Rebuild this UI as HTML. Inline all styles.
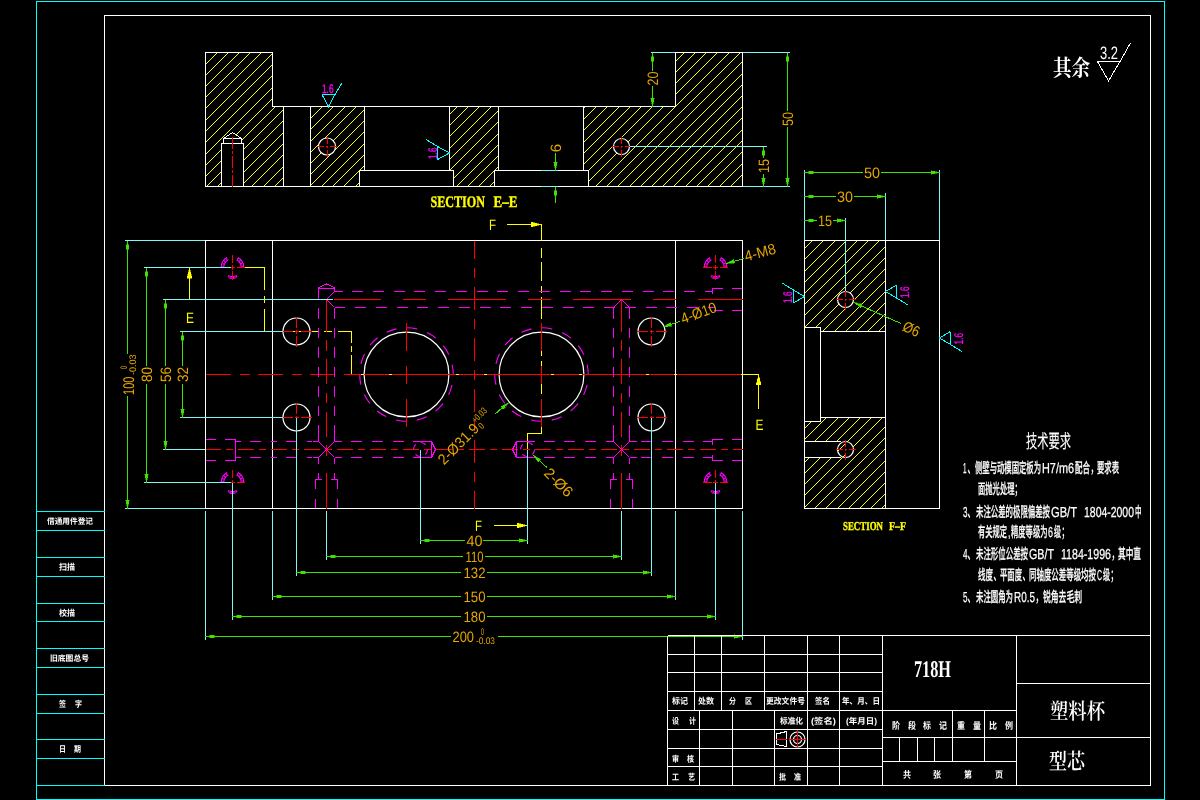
<!DOCTYPE html>
<html lang="zh"><head><meta charset="utf-8"><title>型芯 - 塑料杯</title>
<style>
html,body{margin:0;padding:0;background:#000;width:1200px;height:800px;overflow:hidden}
svg{display:block;will-change:transform}
.t{font-family:"Liberation Sans","DejaVu Sans",sans-serif}
.s{font-family:"Liberation Serif","DejaVu Serif",serif}
.s[fill="#ffff00"]{stroke:#ffff00;stroke-width:.35px}
.c{font-family:"Liberation Sans","Noto Sans CJK SC",sans-serif;font-weight:500;stroke:#fff;stroke-width:.25px}
.cb{font-family:"Liberation Sans","Noto Sans CJK SC",sans-serif}
.cs{font-family:"Liberation Serif","Noto Serif CJK SC",serif}
</style></head><body>
<svg width="1200" height="800" viewBox="0 0 1200 800" shape-rendering="crispEdges" text-rendering="geometricPrecision">
<rect width="1200" height="800" fill="#000"/>
<rect x="36.5" y="1.5" width="1128" height="798" fill="none" stroke="#00ffff"/>
<polyline points="104.5,785.5 104.5,15.5 1150.5,15.5 1150.5,785.5 104.5,785.5" fill="none" stroke="#ffffff" stroke-width="1"/>
<line x1="36.5" y1="511.5" x2="104.5" y2="511.5" stroke="#00ffff" stroke-width="1"/>
<line x1="36.5" y1="530.5" x2="104.5" y2="530.5" stroke="#00ffff" stroke-width="1"/>
<line x1="36.5" y1="557.5" x2="104.5" y2="557.5" stroke="#00ffff" stroke-width="1"/>
<line x1="36.5" y1="576.5" x2="104.5" y2="576.5" stroke="#00ffff" stroke-width="1"/>
<line x1="36.5" y1="603.5" x2="104.5" y2="603.5" stroke="#00ffff" stroke-width="1"/>
<line x1="36.5" y1="621.5" x2="104.5" y2="621.5" stroke="#00ffff" stroke-width="1"/>
<line x1="36.5" y1="648.5" x2="104.5" y2="648.5" stroke="#00ffff" stroke-width="1"/>
<line x1="36.5" y1="667.5" x2="104.5" y2="667.5" stroke="#00ffff" stroke-width="1"/>
<line x1="36.5" y1="694.5" x2="104.5" y2="694.5" stroke="#00ffff" stroke-width="1"/>
<line x1="36.5" y1="713.5" x2="104.5" y2="713.5" stroke="#00ffff" stroke-width="1"/>
<line x1="36.5" y1="739.5" x2="104.5" y2="739.5" stroke="#00ffff" stroke-width="1"/>
<line x1="36.5" y1="758.5" x2="104.5" y2="758.5" stroke="#00ffff" stroke-width="1"/>
<line x1="36.5" y1="785.5" x2="104.5" y2="785.5" stroke="#00ffff" stroke-width="1"/>
<clipPath id="h1"><path d="M205.5,52.5H272.5V106.5H283.5V186.5H205.5Z M221.5,186.5V143.5H223.5V138.5L232.5,132.5L241.5,138.5V143.5H243.5V186.5Z" clip-rule="evenodd"/></clipPath>
<g clip-path="url(#h1)" stroke="#ffff00" stroke-width="1" shape-rendering="crispEdges">
<path d="M71.00,187.00L206.00,52.00M83.00,187.00L218.00,52.00M94.00,187.00L229.00,52.00M105.00,187.00L240.00,52.00M116.00,187.00L251.00,52.00M127.00,187.00L262.00,52.00M139.00,187.00L274.00,52.00M150.00,187.00L285.00,52.00M161.00,187.00L296.00,52.00M173.00,187.00L308.00,52.00M184.00,187.00L319.00,52.00M195.00,187.00L330.00,52.00M206.00,187.00L341.00,52.00M217.00,187.00L352.00,52.00M229.00,187.00L364.00,52.00M240.00,187.00L375.00,52.00M251.00,187.00L386.00,52.00M263.00,187.00L398.00,52.00M274.00,187.00L409.00,52.00" fill="none"/>
</g>
<clipPath id="h2"><path d="M310.5,106.5H364.5V170.5H359.5V186.5H310.5Z M318.5,146.5a8.5,8.5 0 1 0 17.0,0a8.5,8.5 0 1 0 -17.0,0Z" clip-rule="evenodd"/></clipPath>
<g clip-path="url(#h2)" stroke="#ffff00" stroke-width="1" shape-rendering="crispEdges">
<path d="M231.00,187.00L312.00,106.00M242.00,187.00L323.00,106.00M253.00,187.00L334.00,106.00M265.00,187.00L346.00,106.00M276.00,187.00L357.00,106.00M287.00,187.00L368.00,106.00M298.00,187.00L379.00,106.00M309.00,187.00L390.00,106.00M321.00,187.00L402.00,106.00M332.00,187.00L413.00,106.00M343.00,187.00L424.00,106.00M355.00,187.00L436.00,106.00" fill="none"/>
</g>
<clipPath id="h3"><path d="M449.5,106.5H498.5V170.5H494.5V186.5H453.5V170.5H449.5Z" clip-rule="evenodd"/></clipPath>
<g clip-path="url(#h3)" stroke="#ffff00" stroke-width="1" shape-rendering="crispEdges">
<path d="M377.00,187.00L458.00,106.00M388.00,187.00L469.00,106.00M399.00,187.00L480.00,106.00M411.00,187.00L492.00,106.00M422.00,187.00L503.00,106.00M433.00,187.00L514.00,106.00M445.00,187.00L526.00,106.00M456.00,187.00L537.00,106.00M467.00,187.00L548.00,106.00M478.00,187.00L559.00,106.00M489.00,187.00L570.00,106.00" fill="none"/>
</g>
<clipPath id="h4"><path d="M583.5,106.5H675.5V52.5H742.5V186.5H588.5V170.5H583.5Z M613.5,146.5a8,8 0 1 0 16,0a8,8 0 1 0 -16,0Z" clip-rule="evenodd"/></clipPath>
<g clip-path="url(#h4)" stroke="#ffff00" stroke-width="1" shape-rendering="crispEdges">
<path d="M449.00,187.00L584.00,52.00M460.00,187.00L595.00,52.00M471.00,187.00L606.00,52.00M482.00,187.00L617.00,52.00M493.00,187.00L628.00,52.00M505.00,187.00L640.00,52.00M516.00,187.00L651.00,52.00M527.00,187.00L662.00,52.00M539.00,187.00L674.00,52.00M550.00,187.00L685.00,52.00M561.00,187.00L696.00,52.00M572.00,187.00L707.00,52.00M583.00,187.00L718.00,52.00M595.00,187.00L730.00,52.00M606.00,187.00L741.00,52.00M617.00,187.00L752.00,52.00M629.00,187.00L764.00,52.00M640.00,187.00L775.00,52.00M651.00,187.00L786.00,52.00M662.00,187.00L797.00,52.00M673.00,187.00L808.00,52.00M685.00,187.00L820.00,52.00M696.00,187.00L831.00,52.00M707.00,187.00L842.00,52.00M719.00,187.00L854.00,52.00M730.00,187.00L865.00,52.00M741.00,187.00L876.00,52.00" fill="none"/>
</g>
<polygon points="205.5,52.5 272.5,52.5 272.5,106.5 675.5,106.5 675.5,52.5 742.5,52.5 742.5,186.5 205.5,186.5" fill="none" stroke="#ffffff" stroke-width="1"/>
<line x1="283.5" y1="106.5" x2="283.5" y2="186.5" stroke="#ffffff" stroke-width="1"/>
<line x1="310.5" y1="106.5" x2="310.5" y2="186.5" stroke="#ffffff" stroke-width="1"/>
<line x1="364.5" y1="106.5" x2="364.5" y2="170.5" stroke="#ffffff" stroke-width="1"/>
<line x1="449.5" y1="106.5" x2="449.5" y2="170.5" stroke="#ffffff" stroke-width="1"/>
<line x1="498.5" y1="106.5" x2="498.5" y2="170.5" stroke="#ffffff" stroke-width="1"/>
<line x1="583.5" y1="106.5" x2="583.5" y2="170.5" stroke="#ffffff" stroke-width="1"/>
<polyline points="359.5,186.5 359.5,170.5 453.5,170.5 453.5,186.5" fill="none" stroke="#ffffff" stroke-width="1"/>
<polyline points="494.5,186.5 494.5,170.5 588.5,170.5 588.5,186.5" fill="none" stroke="#ffffff" stroke-width="1"/>
<polyline points="221.5,186.5 221.5,143.5 243.5,143.5 243.5,186.5" fill="none" stroke="#ffffff" stroke-width="1"/>
<polyline points="223.5,143.5 223.5,138.5 241.5,138.5 241.5,143.5" fill="none" stroke="#ffffff" stroke-width="1"/>
<polyline points="223.5,138.5 232.5,132.5 241.5,138.5" fill="none" stroke="#ffffff" stroke-width="1"/>
<line x1="232.5" y1="137" x2="232.5" y2="187" stroke="#ff0000" stroke-width="1" stroke-dasharray="12 2 3 2"/>
<circle cx="327" cy="146.5" r="8.5" fill="none" stroke="#ffffff" stroke-width="1.2" shape-rendering="geometricPrecision"/>
<circle cx="621.5" cy="146.5" r="8" fill="none" stroke="#ffffff" stroke-width="1.2" shape-rendering="geometricPrecision"/>
<line x1="317" y1="146.5" x2="337" y2="146.5" stroke="#ff0000" stroke-width="1" stroke-dasharray="7 2 2 2"/>
<line x1="327" y1="136.5" x2="327" y2="156.5" stroke="#ff0000" stroke-width="1" stroke-dasharray="7 2 2 2"/>
<line x1="611.5" y1="146.5" x2="631.5" y2="146.5" stroke="#ff0000" stroke-width="1" stroke-dasharray="7 2 2 2"/>
<line x1="621.5" y1="136.5" x2="621.5" y2="156.5" stroke="#ff0000" stroke-width="1" stroke-dasharray="7 2 2 2"/>
<g transform="translate(328.5 106.5) rotate(0)">
<polyline points="-6.5,-12 6.5,-12 0,0 -6.5,-12" fill="none" stroke="#00ffff"/>
<line x1="6.5" y1="-12" x2="13.5" y2="-23.5" stroke="#00ffff"/>
</g>
<text class="t" x="322" y="92.5" font-size="12.5" fill="#ff00ff" textLength="11.5" lengthAdjust="spacingAndGlyphs" stroke="#ff00ff" stroke-width="0.35">1.6</text>
<g transform="translate(449.5 153) rotate(-90)">
<polyline points="-6.5,-12 6.5,-12 0,0 -6.5,-12" fill="none" stroke="#00ffff"/>
<line x1="6.5" y1="-12" x2="13.5" y2="-23.5" stroke="#00ffff"/>
</g>
<text class="t" x="436.5" y="159" font-size="12.5" fill="#ff00ff" textLength="11.5" lengthAdjust="spacingAndGlyphs" transform="rotate(-90 436.5 159)" stroke="#ff00ff" stroke-width="0.35">1.6</text>
<line x1="651" y1="52.5" x2="675" y2="52.5" stroke="#80f5f5" stroke-width="1"/>
<line x1="651" y1="106.5" x2="661" y2="106.5" stroke="#80f5f5" stroke-width="1"/>
<line x1="652.5" y1="52.5" x2="652.5" y2="71" stroke="#40e000" stroke-width="1"/>
<line x1="652.5" y1="86" x2="652.5" y2="106.5" stroke="#40e000" stroke-width="1"/>
<polygon points="652.50,52.50 654.30,61.00 650.70,61.00" fill="#40e000" stroke="#40e000" stroke-width="0.5"/>
<polygon points="652.50,106.50 650.70,98.00 654.30,98.00" fill="#40e000" stroke="#40e000" stroke-width="0.5"/>
<text class="t" x="658.0" y="78.5" font-size="15" fill="#e6a800" text-anchor="middle" textLength="14" lengthAdjust="spacingAndGlyphs" transform="rotate(-90 658.0 78.5)">20</text>
<line x1="743" y1="52.5" x2="790" y2="52.5" stroke="#80f5f5" stroke-width="1"/>
<line x1="743" y1="186.5" x2="790" y2="186.5" stroke="#80f5f5" stroke-width="1"/>
<line x1="787.5" y1="52.5" x2="787.5" y2="111" stroke="#40e000" stroke-width="1"/>
<line x1="787.5" y1="127" x2="787.5" y2="186.5" stroke="#40e000" stroke-width="1"/>
<polygon points="787.50,52.50 789.30,61.00 785.70,61.00" fill="#40e000" stroke="#40e000" stroke-width="0.5"/>
<polygon points="787.50,186.50 785.70,178.00 789.30,178.00" fill="#40e000" stroke="#40e000" stroke-width="0.5"/>
<text class="t" x="793.0" y="119" font-size="15" fill="#e6a800" text-anchor="middle" textLength="14" lengthAdjust="spacingAndGlyphs" transform="rotate(-90 793.0 119)">50</text>
<line x1="630" y1="146.5" x2="767" y2="146.5" stroke="#80f5f5" stroke-width="1"/>
<line x1="763.5" y1="146.5" x2="763.5" y2="158" stroke="#40e000" stroke-width="1"/>
<line x1="763.5" y1="174" x2="763.5" y2="186.5" stroke="#40e000" stroke-width="1"/>
<polygon points="763.50,146.50 765.30,155.00 761.70,155.00" fill="#40e000" stroke="#40e000" stroke-width="0.5"/>
<polygon points="763.50,186.50 761.70,178.00 765.30,178.00" fill="#40e000" stroke="#40e000" stroke-width="0.5"/>
<text class="t" x="769.0" y="166" font-size="15" fill="#e6a800" text-anchor="middle" textLength="14" lengthAdjust="spacingAndGlyphs" transform="rotate(-90 769.0 166)">15</text>
<line x1="541" y1="170.5" x2="558" y2="170.5" stroke="#80f5f5" stroke-width="1"/>
<line x1="541" y1="186.5" x2="558" y2="186.5" stroke="#80f5f5" stroke-width="1"/>
<line x1="555.5" y1="153" x2="555.5" y2="170.5" stroke="#40e000" stroke-width="1"/>
<line x1="555.5" y1="186.5" x2="555.5" y2="203" stroke="#40e000" stroke-width="1"/>
<polygon points="555.50,170.50 553.70,162.00 557.30,162.00" fill="#40e000" stroke="#40e000" stroke-width="0.5"/>
<polygon points="555.50,186.50 557.30,195.00 553.70,195.00" fill="#40e000" stroke="#40e000" stroke-width="0.5"/>
<text class="t" x="561" y="148" font-size="15" fill="#e6a800" text-anchor="middle" transform="rotate(-90 561 148)">6</text>
<text class="s" x="430.5" y="206.5" font-size="16" fill="#ffff00" textLength="54.5" lengthAdjust="spacingAndGlyphs" font-weight="bold">SECTION</text>
<text class="s" x="493.5" y="206.5" font-size="16" fill="#ffff00" textLength="24" lengthAdjust="spacingAndGlyphs" font-weight="bold">E–E</text>
<rect x="205.5" y="240.5" width="537" height="268" fill="none" stroke="#fff"/>
<line x1="272.5" y1="240.5" x2="272.5" y2="508.5" stroke="#ffffff" stroke-width="1"/>
<line x1="675.5" y1="240.5" x2="675.5" y2="508.5" stroke="#ffffff" stroke-width="1"/>
<polyline points="245,267.5 264.5,267.5 264.5,331.5" fill="none" stroke="#ffff00" stroke-width="1" stroke-dasharray="42 6 7 6 200"/>
<line x1="264.5" y1="331.5" x2="351.5" y2="331.5" stroke="#ffff00" stroke-width="1" stroke-dasharray="54 5 8 6 20"/>
<line x1="351.5" y1="331.5" x2="351.5" y2="374.5" stroke="#ffff00" stroke-width="1" stroke-dasharray="11.5 2.5 6.5 2.5 20"/>
<line x1="351.5" y1="374.5" x2="742.5" y2="374.5" stroke="#ffff00" stroke-width="1"/>
<polyline points="742.5,374.5 758.5,374.5 758.5,409" fill="none" stroke="#ffff00" stroke-width="1"/>
<polygon points="758.50,374.50 761.00,384.50 756.00,384.50" fill="#ffff00" stroke="#ffff00" stroke-width="0.5"/>
<line x1="189.5" y1="268" x2="189.5" y2="300" stroke="#ffff00" stroke-width="1"/>
<polygon points="189.50,268.00 192.00,278.00 187.00,278.00" fill="#ffff00" stroke="#ffff00" stroke-width="0.5"/>
<text class="t" x="186" y="322.5" font-size="15" fill="#ffff00" textLength="8" lengthAdjust="spacingAndGlyphs">E</text>
<text class="t" x="755.5" y="429.5" font-size="15" fill="#ffff00" textLength="8" lengthAdjust="spacingAndGlyphs">E</text>
<line x1="507" y1="224.5" x2="541.5" y2="224.5" stroke="#ffff00" stroke-width="1"/>
<polygon points="541.00,224.50 531.00,227.00 531.00,222.00" fill="#ffff00" stroke="#ffff00" stroke-width="0.5"/>
<line x1="541.5" y1="224.5" x2="541.5" y2="240.5" stroke="#ffff00" stroke-width="1"/>
<line x1="541.5" y1="248" x2="541.5" y2="433.5" stroke="#ffff00" stroke-width="1" stroke-dasharray="10 4 18.5 5 7.5 3.5 22 5"/>
<polyline points="541.5,427 541.5,433.5 527.5,433.5 527.5,449.5" fill="none" stroke="#ffff00" stroke-width="1"/>
<line x1="494" y1="525.5" x2="527.5" y2="525.5" stroke="#ffff00" stroke-width="1"/>
<polygon points="527.00,525.50 517.00,528.00 517.00,523.00" fill="#ffff00" stroke="#ffff00" stroke-width="0.5"/>
<text class="t" x="489" y="229.5" font-size="15" fill="#ffff00" textLength="7" lengthAdjust="spacingAndGlyphs">F</text>
<text class="t" x="475" y="530.5" font-size="15" fill="#ffff00" textLength="7" lengthAdjust="spacingAndGlyphs">F</text>
<circle cx="406.5" cy="374.5" r="42.4" fill="none" stroke="#ffffff" stroke-width="1.2" shape-rendering="geometricPrecision"/>
<circle cx="406.5" cy="374.5" r="46.75" fill="none" stroke="#ff00ff" stroke-width="1.1" stroke-dasharray="10.5 10.48" stroke-dashoffset="10.5" shape-rendering="geometricPrecision"/>
<line x1="406.5" y1="323" x2="406.5" y2="427" stroke="#ff0000" stroke-width="1" stroke-dasharray="27.5 15 18 15 28"/>
<circle cx="541.5" cy="374.5" r="42.4" fill="none" stroke="#ffffff" stroke-width="1.2" shape-rendering="geometricPrecision"/>
<circle cx="541.5" cy="374.5" r="46.75" fill="none" stroke="#ff00ff" stroke-width="1.1" stroke-dasharray="10.5 10.48" stroke-dashoffset="10.5" shape-rendering="geometricPrecision"/>
<line x1="541.5" y1="323" x2="541.5" y2="427" stroke="#ff0000" stroke-width="1" stroke-dasharray="27.5 15 18 15 28"/>
<circle cx="296.5" cy="331.5" r="13.5" fill="none" stroke="#ffffff" stroke-width="1.2" shape-rendering="geometricPrecision"/>
<line x1="281.5" y1="331.5" x2="311.5" y2="331.5" stroke="#ff0000" stroke-width="1" stroke-dasharray="11 2 4 2"/>
<line x1="296.5" y1="316.5" x2="296.5" y2="346.5" stroke="#ff0000" stroke-width="1" stroke-dasharray="11 2 4 2"/>
<circle cx="296.5" cy="417.5" r="13.5" fill="none" stroke="#ffffff" stroke-width="1.2" shape-rendering="geometricPrecision"/>
<line x1="281.5" y1="417.5" x2="311.5" y2="417.5" stroke="#ff0000" stroke-width="1" stroke-dasharray="11 2 4 2"/>
<line x1="296.5" y1="402.5" x2="296.5" y2="432.5" stroke="#ff0000" stroke-width="1" stroke-dasharray="11 2 4 2"/>
<circle cx="651.5" cy="331.5" r="13.5" fill="none" stroke="#ffffff" stroke-width="1.2" shape-rendering="geometricPrecision"/>
<line x1="636.5" y1="331.5" x2="666.5" y2="331.5" stroke="#ff0000" stroke-width="1" stroke-dasharray="11 2 4 2"/>
<line x1="651.5" y1="316.5" x2="651.5" y2="346.5" stroke="#ff0000" stroke-width="1" stroke-dasharray="11 2 4 2"/>
<circle cx="651.5" cy="417.5" r="13.5" fill="none" stroke="#ffffff" stroke-width="1.2" shape-rendering="geometricPrecision"/>
<line x1="636.5" y1="417.5" x2="666.5" y2="417.5" stroke="#ff0000" stroke-width="1" stroke-dasharray="11 2 4 2"/>
<line x1="651.5" y1="402.5" x2="651.5" y2="432.5" stroke="#ff0000" stroke-width="1" stroke-dasharray="11 2 4 2"/>
<path d="M223.80,267.35 A8.7,8.7 0 0 1 228.42,259.82" fill="none" stroke="#ff00ff" stroke-width="1.1" shape-rendering="geometricPrecision"/>
<path d="M221.20,267.30 A11.3,11.3 0 0 1 227.19,257.52" fill="none" stroke="#ff00ff" stroke-width="1.1" shape-rendering="geometricPrecision"/>
<path d="M222.50,267.33 A10,10 0 0 1 227.81,258.67" fill="none" stroke="#ff00ff" stroke-width="1.6" stroke-dasharray="1.3 1.6" shape-rendering="geometricPrecision"/>
<path d="M236.58,259.82 A8.7,8.7 0 0 1 241.20,267.35" fill="none" stroke="#ff00ff" stroke-width="1.1" shape-rendering="geometricPrecision"/>
<path d="M237.81,257.52 A11.3,11.3 0 0 1 243.80,267.30" fill="none" stroke="#ff00ff" stroke-width="1.1" shape-rendering="geometricPrecision"/>
<path d="M237.19,258.67 A10,10 0 0 1 242.50,267.33" fill="none" stroke="#ff00ff" stroke-width="1.6" stroke-dasharray="1.3 1.6" shape-rendering="geometricPrecision"/>
<path d="M236.82,275.62 A9.2,9.2 0 0 1 228.18,275.62" fill="none" stroke="#ff00ff" stroke-width="1" shape-rendering="geometricPrecision"/>
<path d="M236.26,277.84 A11,11 0 0 1 228.74,277.84" fill="none" stroke="#ff00ff" stroke-width="1" shape-rendering="geometricPrecision"/>
<path d="M237.19,276.33 A10,10 0 0 1 227.81,276.33" fill="none" stroke="#ff00ff" stroke-width="1.5" stroke-dasharray="1.3 1.6" shape-rendering="geometricPrecision"/>
<line x1="232.5" y1="255.0" x2="232.5" y2="280.0" stroke="#ff0000" stroke-width="1" stroke-dasharray="8 2 5 1 9"/>
<line x1="220.0" y1="267.5" x2="245.0" y2="267.5" stroke="#ff0000" stroke-width="1" stroke-dasharray="9 1 5 2 8"/>
<path d="M706.80,267.35 A8.7,8.7 0 0 1 711.42,259.82" fill="none" stroke="#ff00ff" stroke-width="1.1" shape-rendering="geometricPrecision"/>
<path d="M704.20,267.30 A11.3,11.3 0 0 1 710.19,257.52" fill="none" stroke="#ff00ff" stroke-width="1.1" shape-rendering="geometricPrecision"/>
<path d="M705.50,267.33 A10,10 0 0 1 710.81,258.67" fill="none" stroke="#ff00ff" stroke-width="1.6" stroke-dasharray="1.3 1.6" shape-rendering="geometricPrecision"/>
<path d="M719.58,259.82 A8.7,8.7 0 0 1 724.20,267.35" fill="none" stroke="#ff00ff" stroke-width="1.1" shape-rendering="geometricPrecision"/>
<path d="M720.81,257.52 A11.3,11.3 0 0 1 726.80,267.30" fill="none" stroke="#ff00ff" stroke-width="1.1" shape-rendering="geometricPrecision"/>
<path d="M720.19,258.67 A10,10 0 0 1 725.50,267.33" fill="none" stroke="#ff00ff" stroke-width="1.6" stroke-dasharray="1.3 1.6" shape-rendering="geometricPrecision"/>
<path d="M719.82,275.62 A9.2,9.2 0 0 1 711.18,275.62" fill="none" stroke="#ff00ff" stroke-width="1" shape-rendering="geometricPrecision"/>
<path d="M719.26,277.84 A11,11 0 0 1 711.74,277.84" fill="none" stroke="#ff00ff" stroke-width="1" shape-rendering="geometricPrecision"/>
<path d="M720.19,276.33 A10,10 0 0 1 710.81,276.33" fill="none" stroke="#ff00ff" stroke-width="1.5" stroke-dasharray="1.3 1.6" shape-rendering="geometricPrecision"/>
<line x1="715.5" y1="255.0" x2="715.5" y2="280.0" stroke="#ff0000" stroke-width="1" stroke-dasharray="8 2 5 1 9"/>
<line x1="703.0" y1="267.5" x2="728.0" y2="267.5" stroke="#ff0000" stroke-width="1" stroke-dasharray="9 1 5 2 8"/>
<path d="M223.80,482.35 A8.7,8.7 0 0 1 228.42,474.82" fill="none" stroke="#ff00ff" stroke-width="1.1" shape-rendering="geometricPrecision"/>
<path d="M221.20,482.30 A11.3,11.3 0 0 1 227.19,472.52" fill="none" stroke="#ff00ff" stroke-width="1.1" shape-rendering="geometricPrecision"/>
<path d="M222.50,482.33 A10,10 0 0 1 227.81,473.67" fill="none" stroke="#ff00ff" stroke-width="1.6" stroke-dasharray="1.3 1.6" shape-rendering="geometricPrecision"/>
<path d="M236.58,474.82 A8.7,8.7 0 0 1 241.20,482.35" fill="none" stroke="#ff00ff" stroke-width="1.1" shape-rendering="geometricPrecision"/>
<path d="M237.81,472.52 A11.3,11.3 0 0 1 243.80,482.30" fill="none" stroke="#ff00ff" stroke-width="1.1" shape-rendering="geometricPrecision"/>
<path d="M237.19,473.67 A10,10 0 0 1 242.50,482.33" fill="none" stroke="#ff00ff" stroke-width="1.6" stroke-dasharray="1.3 1.6" shape-rendering="geometricPrecision"/>
<path d="M236.82,490.62 A9.2,9.2 0 0 1 228.18,490.62" fill="none" stroke="#ff00ff" stroke-width="1" shape-rendering="geometricPrecision"/>
<path d="M236.26,492.84 A11,11 0 0 1 228.74,492.84" fill="none" stroke="#ff00ff" stroke-width="1" shape-rendering="geometricPrecision"/>
<path d="M237.19,491.33 A10,10 0 0 1 227.81,491.33" fill="none" stroke="#ff00ff" stroke-width="1.5" stroke-dasharray="1.3 1.6" shape-rendering="geometricPrecision"/>
<line x1="232.5" y1="470.0" x2="232.5" y2="495.0" stroke="#ff0000" stroke-width="1" stroke-dasharray="8 2 5 1 9"/>
<line x1="220.0" y1="482.5" x2="245.0" y2="482.5" stroke="#ff0000" stroke-width="1" stroke-dasharray="9 1 5 2 8"/>
<path d="M706.80,482.35 A8.7,8.7 0 0 1 711.42,474.82" fill="none" stroke="#ff00ff" stroke-width="1.1" shape-rendering="geometricPrecision"/>
<path d="M704.20,482.30 A11.3,11.3 0 0 1 710.19,472.52" fill="none" stroke="#ff00ff" stroke-width="1.1" shape-rendering="geometricPrecision"/>
<path d="M705.50,482.33 A10,10 0 0 1 710.81,473.67" fill="none" stroke="#ff00ff" stroke-width="1.6" stroke-dasharray="1.3 1.6" shape-rendering="geometricPrecision"/>
<path d="M719.58,474.82 A8.7,8.7 0 0 1 724.20,482.35" fill="none" stroke="#ff00ff" stroke-width="1.1" shape-rendering="geometricPrecision"/>
<path d="M720.81,472.52 A11.3,11.3 0 0 1 726.80,482.30" fill="none" stroke="#ff00ff" stroke-width="1.1" shape-rendering="geometricPrecision"/>
<path d="M720.19,473.67 A10,10 0 0 1 725.50,482.33" fill="none" stroke="#ff00ff" stroke-width="1.6" stroke-dasharray="1.3 1.6" shape-rendering="geometricPrecision"/>
<path d="M719.82,490.62 A9.2,9.2 0 0 1 711.18,490.62" fill="none" stroke="#ff00ff" stroke-width="1" shape-rendering="geometricPrecision"/>
<path d="M719.26,492.84 A11,11 0 0 1 711.74,492.84" fill="none" stroke="#ff00ff" stroke-width="1" shape-rendering="geometricPrecision"/>
<path d="M720.19,491.33 A10,10 0 0 1 710.81,491.33" fill="none" stroke="#ff00ff" stroke-width="1.5" stroke-dasharray="1.3 1.6" shape-rendering="geometricPrecision"/>
<line x1="715.5" y1="470.0" x2="715.5" y2="495.0" stroke="#ff0000" stroke-width="1" stroke-dasharray="8 2 5 1 9"/>
<line x1="703.0" y1="482.5" x2="728.0" y2="482.5" stroke="#ff0000" stroke-width="1" stroke-dasharray="9 1 5 2 8"/>
<line x1="205.5" y1="374.5" x2="352" y2="374.5" stroke="#ff0000" stroke-width="1" stroke-dasharray="25.5 8.5 10 8"/>
<line x1="351.5" y1="374.5" x2="742.5" y2="374.5" stroke="#ff0000" stroke-width="1" stroke-dasharray="64 3 25 3" stroke-dashoffset="54.5"/>
<line x1="474.5" y1="240.5" x2="474.5" y2="508.5" stroke="#ff0000" stroke-width="1" stroke-dasharray="23.5 8.5 10.5 8.5" stroke-dashoffset="5"/>
<line x1="334" y1="299.5" x2="742.5" y2="299.5" stroke="#ff0000" stroke-width="1" stroke-dasharray="58 22 23 22" stroke-dashoffset="11"/>
<line x1="205.5" y1="449.5" x2="742.5" y2="449.5" stroke="#ff0000" stroke-width="1" stroke-dasharray="16 5 7 5" stroke-dashoffset="0.5"/>
<line x1="326.5" y1="299.5" x2="326.5" y2="332" stroke="#ff0000" stroke-width="1"/>
<line x1="326.5" y1="340" x2="326.5" y2="463.5" stroke="#ff0000" stroke-width="1" stroke-dasharray="10.5 8.5 25 8.5"/>
<line x1="326.5" y1="472.5" x2="326.5" y2="508.5" stroke="#ff0000" stroke-width="1"/>
<line x1="621.5" y1="299.5" x2="621.5" y2="332" stroke="#ff0000" stroke-width="1"/>
<line x1="621.5" y1="340" x2="621.5" y2="463.5" stroke="#ff0000" stroke-width="1" stroke-dasharray="10.5 8.5 25 8.5"/>
<line x1="621.5" y1="472.5" x2="621.5" y2="508.5" stroke="#ff0000" stroke-width="1"/>
<line x1="352" y1="291.5" x2="713" y2="291.5" stroke="#ff00ff" stroke-width="1" stroke-dasharray="11 9.75"/>
<line x1="355" y1="307.5" x2="715" y2="307.5" stroke="#ff00ff" stroke-width="1" stroke-dasharray="11 9.75"/>
<line x1="235.5" y1="441.5" x2="313" y2="441.5" stroke="#ff00ff" stroke-width="1" stroke-dasharray="5.5 9 11 10"/>
<line x1="351" y1="441.5" x2="413" y2="441.5" stroke="#ff00ff" stroke-width="1" stroke-dasharray="11 9.75"/>
<line x1="543.5" y1="441.5" x2="608" y2="441.5" stroke="#ff00ff" stroke-width="1" stroke-dasharray="11 9.75"/>
<line x1="641" y1="441.5" x2="712.5" y2="441.5" stroke="#ff00ff" stroke-width="1" stroke-dasharray="11 9.75"/>
<line x1="235.5" y1="457.5" x2="313" y2="457.5" stroke="#ff00ff" stroke-width="1" stroke-dasharray="5.5 9 11 10"/>
<line x1="351" y1="457.5" x2="413" y2="457.5" stroke="#ff00ff" stroke-width="1" stroke-dasharray="11 9.75"/>
<line x1="543.5" y1="457.5" x2="608" y2="457.5" stroke="#ff00ff" stroke-width="1" stroke-dasharray="11 9.75"/>
<line x1="641" y1="457.5" x2="712.5" y2="457.5" stroke="#ff00ff" stroke-width="1" stroke-dasharray="11 9.75"/>
<line x1="318.5" y1="308" x2="318.5" y2="441.5" stroke="#ff00ff" stroke-width="1" stroke-dasharray="10.5 9"/>
<line x1="318.5" y1="432" x2="318.5" y2="441.5" stroke="#ff00ff" stroke-width="1"/>
<line x1="318.5" y1="457.5" x2="318.5" y2="463.5" stroke="#ff00ff" stroke-width="1"/>
<line x1="318.5" y1="473" x2="318.5" y2="479.5" stroke="#ff00ff" stroke-width="1"/>
<line x1="334.5" y1="308" x2="334.5" y2="441.5" stroke="#ff00ff" stroke-width="1" stroke-dasharray="10.5 9"/>
<line x1="334.5" y1="432" x2="334.5" y2="441.5" stroke="#ff00ff" stroke-width="1"/>
<line x1="334.5" y1="457.5" x2="334.5" y2="463.5" stroke="#ff00ff" stroke-width="1"/>
<line x1="334.5" y1="473" x2="334.5" y2="479.5" stroke="#ff00ff" stroke-width="1"/>
<line x1="613.5" y1="308" x2="613.5" y2="441.5" stroke="#ff00ff" stroke-width="1" stroke-dasharray="10.5 9"/>
<line x1="613.5" y1="432" x2="613.5" y2="441.5" stroke="#ff00ff" stroke-width="1"/>
<line x1="613.5" y1="457.5" x2="613.5" y2="463.5" stroke="#ff00ff" stroke-width="1"/>
<line x1="613.5" y1="473" x2="613.5" y2="479.5" stroke="#ff00ff" stroke-width="1"/>
<line x1="629.5" y1="308" x2="629.5" y2="441.5" stroke="#ff00ff" stroke-width="1" stroke-dasharray="10.5 9"/>
<line x1="629.5" y1="432" x2="629.5" y2="441.5" stroke="#ff00ff" stroke-width="1"/>
<line x1="629.5" y1="457.5" x2="629.5" y2="463.5" stroke="#ff00ff" stroke-width="1"/>
<line x1="629.5" y1="473" x2="629.5" y2="479.5" stroke="#ff00ff" stroke-width="1"/>
<polyline points="318.5,299.5 318.5,287.5 326.5,284 334.5,287.5 334.5,291.5 326.5,299.5 334.5,307.5" fill="none" stroke="#ff00ff" stroke-width="1"/>
<line x1="318.5" y1="288.5" x2="334.5" y2="288.5" stroke="#ff00ff" stroke-width="1"/>
<line x1="334.5" y1="291.5" x2="343" y2="291.5" stroke="#ff00ff" stroke-width="1"/>
<line x1="334.5" y1="307.5" x2="345" y2="307.5" stroke="#ff00ff" stroke-width="1"/>
<polyline points="613.5,307.5 621.5,299.5 629.5,307.5" fill="none" stroke="#ff00ff" stroke-width="1"/>
<line x1="318.5" y1="441.5" x2="334.5" y2="457.5" stroke="#ff00ff" stroke-width="1"/>
<line x1="318.5" y1="457.5" x2="334.5" y2="441.5" stroke="#ff00ff" stroke-width="1"/>
<line x1="313.0" y1="441.5" x2="318.5" y2="441.5" stroke="#ff00ff" stroke-width="1"/>
<line x1="334.5" y1="441.5" x2="341.5" y2="441.5" stroke="#ff00ff" stroke-width="1"/>
<line x1="313.0" y1="457.5" x2="318.5" y2="457.5" stroke="#ff00ff" stroke-width="1"/>
<line x1="334.5" y1="457.5" x2="341.5" y2="457.5" stroke="#ff00ff" stroke-width="1"/>
<line x1="613.5" y1="441.5" x2="629.5" y2="457.5" stroke="#ff00ff" stroke-width="1"/>
<line x1="613.5" y1="457.5" x2="629.5" y2="441.5" stroke="#ff00ff" stroke-width="1"/>
<line x1="608.0" y1="441.5" x2="613.5" y2="441.5" stroke="#ff00ff" stroke-width="1"/>
<line x1="629.5" y1="441.5" x2="636.5" y2="441.5" stroke="#ff00ff" stroke-width="1"/>
<line x1="608.0" y1="457.5" x2="613.5" y2="457.5" stroke="#ff00ff" stroke-width="1"/>
<line x1="629.5" y1="457.5" x2="636.5" y2="457.5" stroke="#ff00ff" stroke-width="1"/>
<polyline points="322.0,479.5 315.5,479.5 315.5,489" fill="none" stroke="#ff00ff" stroke-width="1"/>
<line x1="315.5" y1="499" x2="315.5" y2="508" stroke="#ff00ff" stroke-width="1"/>
<polyline points="331.0,479.5 337.5,479.5 337.5,489" fill="none" stroke="#ff00ff" stroke-width="1"/>
<line x1="337.5" y1="499" x2="337.5" y2="508" stroke="#ff00ff" stroke-width="1"/>
<polyline points="617.0,479.5 610.5,479.5 610.5,489" fill="none" stroke="#ff00ff" stroke-width="1"/>
<line x1="610.5" y1="499" x2="610.5" y2="508" stroke="#ff00ff" stroke-width="1"/>
<polyline points="626.0,479.5 632.5,479.5 632.5,489" fill="none" stroke="#ff00ff" stroke-width="1"/>
<line x1="632.5" y1="499" x2="632.5" y2="508" stroke="#ff00ff" stroke-width="1"/>
<polyline points="225,439.5 235.5,439.5 235.5,460.5 225,460.5" fill="none" stroke="#ff00ff" stroke-width="1"/>
<line x1="205.5" y1="439.5" x2="216" y2="439.5" stroke="#ff00ff" stroke-width="1"/>
<line x1="205.5" y1="460.5" x2="216" y2="460.5" stroke="#ff00ff" stroke-width="1"/>
<polyline points="723,439.5 712.5,439.5 712.5,445" fill="none" stroke="#ff00ff" stroke-width="1"/>
<polyline points="723,460.5 712.5,460.5 712.5,455" fill="none" stroke="#ff00ff" stroke-width="1"/>
<line x1="732" y1="439.5" x2="742" y2="439.5" stroke="#ff00ff" stroke-width="1"/>
<line x1="732" y1="460.5" x2="742" y2="460.5" stroke="#ff00ff" stroke-width="1"/>
<polyline points="712.5,294 712.5,288.5 723,288.5" fill="none" stroke="#ff00ff" stroke-width="1"/>
<line x1="732" y1="288.5" x2="742" y2="288.5" stroke="#ff00ff" stroke-width="1"/>
<line x1="714" y1="310.5" x2="723" y2="310.5" stroke="#ff00ff" stroke-width="1"/>
<line x1="732" y1="310.5" x2="742" y2="310.5" stroke="#ff00ff" stroke-width="1"/>
<polyline points="413,441.5 431.5,441.5 435.5,449.5 431.5,457.5 413,457.5" fill="none" stroke="#ff00ff" stroke-width="1"/>
<line x1="431.5" y1="441.5" x2="431.5" y2="457.5" stroke="#ff00ff" stroke-width="1"/>
<circle cx="420.5" cy="449.5" r="7" fill="none" stroke="#ff00ff" stroke-width="1.2" stroke-dasharray="5.5 5.5" shape-rendering="geometricPrecision"/>
<polyline points="535,441.5 516.5,441.5 512.5,449.5 516.5,457.5 535,457.5" fill="none" stroke="#ff00ff" stroke-width="1"/>
<line x1="516.5" y1="441.5" x2="516.5" y2="457.5" stroke="#ff00ff" stroke-width="1"/>
<circle cx="527.5" cy="449.5" r="7" fill="none" stroke="#ff00ff" stroke-width="1.2" stroke-dasharray="5.5 5.5" shape-rendering="geometricPrecision"/>
<line x1="125" y1="240.5" x2="205" y2="240.5" stroke="#80f5f5" stroke-width="1"/>
<line x1="144" y1="267.5" x2="231" y2="267.5" stroke="#80f5f5" stroke-width="1"/>
<line x1="163" y1="299.5" x2="333" y2="299.5" stroke="#80f5f5" stroke-width="1"/>
<line x1="180" y1="331.5" x2="283" y2="331.5" stroke="#80f5f5" stroke-width="1"/>
<line x1="180" y1="417.5" x2="283" y2="417.5" stroke="#80f5f5" stroke-width="1"/>
<line x1="163" y1="449.5" x2="205" y2="449.5" stroke="#80f5f5" stroke-width="1"/>
<line x1="144" y1="482.5" x2="231" y2="482.5" stroke="#80f5f5" stroke-width="1"/>
<line x1="125" y1="508.5" x2="205" y2="508.5" stroke="#80f5f5" stroke-width="1"/>
<line x1="127.5" y1="240.5" x2="127.5" y2="353.5" stroke="#40e000" stroke-width="1"/>
<line x1="127.5" y1="396" x2="127.5" y2="508.5" stroke="#40e000" stroke-width="1"/>
<polygon points="127.50,240.50 129.30,249.00 125.70,249.00" fill="#40e000" stroke="#40e000" stroke-width="0.5"/>
<polygon points="127.50,508.50 125.70,500.00 129.30,500.00" fill="#40e000" stroke="#40e000" stroke-width="0.5"/>
<line x1="146.5" y1="267.5" x2="146.5" y2="366" stroke="#40e000" stroke-width="1"/>
<line x1="146.5" y1="384" x2="146.5" y2="482.5" stroke="#40e000" stroke-width="1"/>
<polygon points="146.50,267.50 148.30,276.00 144.70,276.00" fill="#40e000" stroke="#40e000" stroke-width="0.5"/>
<polygon points="146.50,482.50 144.70,474.00 148.30,474.00" fill="#40e000" stroke="#40e000" stroke-width="0.5"/>
<text class="t" x="152.0" y="374.5" font-size="15" fill="#e6a800" text-anchor="middle" textLength="15" lengthAdjust="spacingAndGlyphs" transform="rotate(-90 152.0 374.5)">80</text>
<line x1="165.5" y1="299.5" x2="165.5" y2="366" stroke="#40e000" stroke-width="1"/>
<line x1="165.5" y1="384" x2="165.5" y2="449.5" stroke="#40e000" stroke-width="1"/>
<polygon points="165.50,299.50 167.30,308.00 163.70,308.00" fill="#40e000" stroke="#40e000" stroke-width="0.5"/>
<polygon points="165.50,449.50 163.70,441.00 167.30,441.00" fill="#40e000" stroke="#40e000" stroke-width="0.5"/>
<text class="t" x="171.0" y="374.5" font-size="15" fill="#e6a800" text-anchor="middle" textLength="15" lengthAdjust="spacingAndGlyphs" transform="rotate(-90 171.0 374.5)">56</text>
<line x1="182.5" y1="331.5" x2="182.5" y2="366" stroke="#40e000" stroke-width="1"/>
<line x1="182.5" y1="384" x2="182.5" y2="417.5" stroke="#40e000" stroke-width="1"/>
<polygon points="182.50,331.50 184.30,340.00 180.70,340.00" fill="#40e000" stroke="#40e000" stroke-width="0.5"/>
<polygon points="182.50,417.50 180.70,409.00 184.30,409.00" fill="#40e000" stroke="#40e000" stroke-width="0.5"/>
<text class="t" x="188.0" y="374.5" font-size="15" fill="#e6a800" text-anchor="middle" textLength="15" lengthAdjust="spacingAndGlyphs" transform="rotate(-90 188.0 374.5)">32</text>
<text class="t" x="134" y="395" font-size="15.5" fill="#e6a800" textLength="18.5" lengthAdjust="spacingAndGlyphs" transform="rotate(-90 134 395)">100</text>
<text class="t" x="127" y="369" font-size="9.5" fill="#e6a800" textLength="3" lengthAdjust="spacingAndGlyphs" transform="rotate(-90 127 369)">0</text>
<text class="t" x="136" y="375" font-size="9.5" fill="#e6a800" textLength="20.5" lengthAdjust="spacingAndGlyphs" transform="rotate(-90 136 375)">-0.03</text>
<line x1="205.5" y1="511" x2="205.5" y2="640" stroke="#80f5f5" stroke-width="1"/>
<line x1="232.5" y1="482.5" x2="232.5" y2="620" stroke="#80f5f5" stroke-width="1"/>
<line x1="272.5" y1="511" x2="272.5" y2="600" stroke="#80f5f5" stroke-width="1"/>
<line x1="296.5" y1="417.5" x2="296.5" y2="576" stroke="#80f5f5" stroke-width="1"/>
<line x1="326.5" y1="511" x2="326.5" y2="560" stroke="#80f5f5" stroke-width="1"/>
<line x1="420.5" y1="449.5" x2="420.5" y2="544" stroke="#80f5f5" stroke-width="1"/>
<line x1="527.5" y1="449.5" x2="527.5" y2="544" stroke="#80f5f5" stroke-width="1"/>
<line x1="621.5" y1="511" x2="621.5" y2="560" stroke="#80f5f5" stroke-width="1"/>
<line x1="651.5" y1="417.5" x2="651.5" y2="576" stroke="#80f5f5" stroke-width="1"/>
<line x1="675.5" y1="511" x2="675.5" y2="600" stroke="#80f5f5" stroke-width="1"/>
<line x1="715.5" y1="482.5" x2="715.5" y2="620" stroke="#80f5f5" stroke-width="1"/>
<line x1="742.5" y1="511" x2="742.5" y2="640" stroke="#80f5f5" stroke-width="1"/>
<line x1="420.5" y1="540.5" x2="465" y2="540.5" stroke="#40e000" stroke-width="1"/>
<line x1="483" y1="540.5" x2="527.5" y2="540.5" stroke="#40e000" stroke-width="1"/>
<polygon points="420.50,540.50 429.00,538.70 429.00,542.30" fill="#40e000" stroke="#40e000" stroke-width="0.5"/>
<polygon points="527.50,540.50 519.00,542.30 519.00,538.70" fill="#40e000" stroke="#40e000" stroke-width="0.5"/>
<text class="t" x="474.5" y="546.0" font-size="15" fill="#e6a800" text-anchor="middle" textLength="16" lengthAdjust="spacingAndGlyphs">40</text>
<line x1="326.5" y1="556.5" x2="463" y2="556.5" stroke="#40e000" stroke-width="1"/>
<line x1="485" y1="556.5" x2="621.5" y2="556.5" stroke="#40e000" stroke-width="1"/>
<polygon points="326.50,556.50 335.00,554.70 335.00,558.30" fill="#40e000" stroke="#40e000" stroke-width="0.5"/>
<polygon points="621.50,556.50 613.00,558.30 613.00,554.70" fill="#40e000" stroke="#40e000" stroke-width="0.5"/>
<text class="t" x="474.5" y="562.0" font-size="15" fill="#e6a800" text-anchor="middle" textLength="18" lengthAdjust="spacingAndGlyphs">110</text>
<line x1="296.5" y1="572.5" x2="461" y2="572.5" stroke="#40e000" stroke-width="1"/>
<line x1="487" y1="572.5" x2="651.5" y2="572.5" stroke="#40e000" stroke-width="1"/>
<polygon points="296.50,572.50 305.00,570.70 305.00,574.30" fill="#40e000" stroke="#40e000" stroke-width="0.5"/>
<polygon points="651.50,572.50 643.00,574.30 643.00,570.70" fill="#40e000" stroke="#40e000" stroke-width="0.5"/>
<text class="t" x="474.5" y="578.0" font-size="15" fill="#e6a800" text-anchor="middle" textLength="22" lengthAdjust="spacingAndGlyphs">132</text>
<line x1="272.5" y1="596.5" x2="461" y2="596.5" stroke="#40e000" stroke-width="1"/>
<line x1="487" y1="596.5" x2="675.5" y2="596.5" stroke="#40e000" stroke-width="1"/>
<polygon points="272.50,596.50 281.00,594.70 281.00,598.30" fill="#40e000" stroke="#40e000" stroke-width="0.5"/>
<polygon points="675.50,596.50 667.00,598.30 667.00,594.70" fill="#40e000" stroke="#40e000" stroke-width="0.5"/>
<text class="t" x="474.5" y="602.0" font-size="15" fill="#e6a800" text-anchor="middle" textLength="22" lengthAdjust="spacingAndGlyphs">150</text>
<line x1="232.5" y1="616.5" x2="461" y2="616.5" stroke="#40e000" stroke-width="1"/>
<line x1="487" y1="616.5" x2="715.5" y2="616.5" stroke="#40e000" stroke-width="1"/>
<polygon points="232.50,616.50 241.00,614.70 241.00,618.30" fill="#40e000" stroke="#40e000" stroke-width="0.5"/>
<polygon points="715.50,616.50 707.00,618.30 707.00,614.70" fill="#40e000" stroke="#40e000" stroke-width="0.5"/>
<text class="t" x="474.5" y="622.0" font-size="15" fill="#e6a800" text-anchor="middle" textLength="22" lengthAdjust="spacingAndGlyphs">180</text>
<line x1="205.5" y1="636.5" x2="451" y2="636.5" stroke="#40e000" stroke-width="1"/>
<line x1="498" y1="636.5" x2="742.5" y2="636.5" stroke="#40e000" stroke-width="1"/>
<polygon points="205.50,636.50 214.00,634.70 214.00,638.30" fill="#40e000" stroke="#40e000" stroke-width="0.5"/>
<polygon points="742.50,636.50 734.00,638.30 734.00,634.70" fill="#40e000" stroke="#40e000" stroke-width="0.5"/>
<text class="t" x="452.5" y="642" font-size="15" fill="#e6a800" textLength="21.5" lengthAdjust="spacingAndGlyphs">200</text>
<text class="t" x="481" y="635" font-size="9.5" fill="#e6a800" textLength="3" lengthAdjust="spacingAndGlyphs">0</text>
<text class="t" x="476" y="644" font-size="9.5" fill="#e6a800" textLength="19" lengthAdjust="spacingAndGlyphs">-0.03</text>
<line x1="726" y1="263.5" x2="744" y2="258.5" stroke="#40e000" stroke-width="1"/>
<polygon points="726.00,263.50 733.71,259.49 734.67,262.96" fill="#40e000" stroke="#40e000" stroke-width="0.5"/>
<text class="t" x="746" y="261.5" font-size="15" fill="#e6a800" textLength="32" lengthAdjust="spacingAndGlyphs" transform="rotate(-15 746 261.5)">4-M8</text>
<line x1="663" y1="327" x2="680" y2="321.5" stroke="#40e000" stroke-width="1"/>
<polygon points="663.00,327.00 670.53,322.67 671.64,326.10" fill="#40e000" stroke="#40e000" stroke-width="0.5"/>
<text class="t" x="683" y="324" font-size="15" fill="#e6a800" textLength="37" lengthAdjust="spacingAndGlyphs" transform="rotate(-20 683 324)">4-Ø10</text>
<line x1="508.5" y1="402.5" x2="495" y2="414" stroke="#40e000" stroke-width="1"/>
<polygon points="508.50,402.50 503.20,409.38 500.86,406.64" fill="#40e000" stroke="#40e000" stroke-width="0.5"/>
<text class="t" x="444" y="465.5" font-size="15" fill="#e6a800" textLength="51" lengthAdjust="spacingAndGlyphs" transform="rotate(-45 444 465.5)">2-Ø31.9</text>
<text class="t" x="475.5" y="423.5" font-size="9.5" fill="#e6a800" textLength="17" lengthAdjust="spacingAndGlyphs" transform="rotate(-45 475.5 423.5)">+0.03</text>
<text class="t" x="482" y="429.5" font-size="9.5" fill="#e6a800" textLength="4" lengthAdjust="spacingAndGlyphs" transform="rotate(-45 482 429.5)">0</text>
<line x1="533" y1="455" x2="547" y2="467.5" stroke="#40e000" stroke-width="1"/>
<polygon points="533.00,455.00 540.54,459.32 538.14,462.00" fill="#40e000" stroke="#40e000" stroke-width="0.5"/>
<text class="t" x="543" y="474" font-size="15" fill="#e6a800" textLength="34" lengthAdjust="spacingAndGlyphs" transform="rotate(45 543 474)">2-Ø6</text>
<clipPath id="h5"><path d="M804.5,240.5H885.5V331.5H820.5V327.5H804.5Z M837.5,299.5a8,8 0 1 0 16,0a8,8 0 1 0 -16,0Z" clip-rule="evenodd"/></clipPath>
<g clip-path="url(#h5)" stroke="#ffff00" stroke-width="1" shape-rendering="crispEdges">
<path d="M721.00,332.00L813.00,240.00M732.00,332.00L824.00,240.00M744.00,332.00L836.00,240.00M755.00,332.00L847.00,240.00M766.00,332.00L858.00,240.00M777.00,332.00L869.00,240.00M788.00,332.00L880.00,240.00M800.00,332.00L892.00,240.00M811.00,332.00L903.00,240.00M822.00,332.00L914.00,240.00M834.00,332.00L926.00,240.00M845.00,332.00L937.00,240.00M856.00,332.00L948.00,240.00M867.00,332.00L959.00,240.00M878.00,332.00L970.00,240.00" fill="none"/>
</g>
<clipPath id="h6"><path d="M804.5,421.5H820.5V417.5H885.5V508.5H804.5Z M804.5,441.5H845.5V457.5H804.5Z M837.5,449.5a8,8 0 1 0 16,0a8,8 0 1 0 -16,0Z" clip-rule="evenodd"/></clipPath>
<g clip-path="url(#h6)" stroke="#ffff00" stroke-width="1" shape-rendering="crispEdges">
<path d="M713.00,509.00L805.00,417.00M724.00,509.00L816.00,417.00M735.00,509.00L827.00,417.00M747.00,509.00L839.00,417.00M758.00,509.00L850.00,417.00M769.00,509.00L861.00,417.00M780.00,509.00L872.00,417.00M791.00,509.00L883.00,417.00M803.00,509.00L895.00,417.00M814.00,509.00L906.00,417.00M825.00,509.00L917.00,417.00M837.00,509.00L929.00,417.00M848.00,509.00L940.00,417.00M859.00,509.00L951.00,417.00M870.00,509.00L962.00,417.00M881.00,509.00L973.00,417.00" fill="none"/>
</g>
<polygon points="804.5,240.5 939.5,240.5 939.5,508.5 804.5,508.5" fill="none" stroke="#ffffff" stroke-width="1"/>
<line x1="885.5" y1="240.5" x2="885.5" y2="508.5" stroke="#ffffff" stroke-width="1"/>
<polyline points="804.5,327.5 820.5,327.5 820.5,421.5 804.5,421.5" fill="none" stroke="#ffffff" stroke-width="1"/>
<line x1="820.5" y1="331.5" x2="885.5" y2="331.5" stroke="#ffffff" stroke-width="1"/>
<line x1="820.5" y1="417.5" x2="885.5" y2="417.5" stroke="#ffffff" stroke-width="1"/>
<line x1="804.5" y1="441.5" x2="841" y2="441.5" stroke="#ffffff" stroke-width="1"/>
<line x1="804.5" y1="457.5" x2="841" y2="457.5" stroke="#ffffff" stroke-width="1"/>
<circle cx="845.5" cy="299.5" r="8" fill="none" stroke="#ffffff" stroke-width="1.2" shape-rendering="geometricPrecision"/>
<circle cx="845.5" cy="449.5" r="8" fill="none" stroke="#ffffff" stroke-width="1.2" shape-rendering="geometricPrecision"/>
<line x1="836" y1="299.5" x2="856" y2="299.5" stroke="#ff0000" stroke-width="1" stroke-dasharray="7 2 2 2"/>
<line x1="845.5" y1="289.5" x2="845.5" y2="309.5" stroke="#ff0000" stroke-width="1" stroke-dasharray="7 2 2 2"/>
<line x1="836" y1="449.5" x2="856" y2="449.5" stroke="#ff0000" stroke-width="1" stroke-dasharray="7 2 2 2"/>
<line x1="845.5" y1="439.5" x2="845.5" y2="459.5" stroke="#ff0000" stroke-width="1" stroke-dasharray="7 2 2 2"/>
<line x1="804.5" y1="170" x2="804.5" y2="240" stroke="#80f5f5" stroke-width="1"/>
<line x1="939.5" y1="170" x2="939.5" y2="240" stroke="#80f5f5" stroke-width="1"/>
<line x1="885.5" y1="193" x2="885.5" y2="240" stroke="#80f5f5" stroke-width="1"/>
<line x1="845.5" y1="218" x2="845.5" y2="291" stroke="#80f5f5" stroke-width="1"/>
<line x1="804.5" y1="172.5" x2="863" y2="172.5" stroke="#40e000" stroke-width="1"/>
<line x1="881" y1="172.5" x2="939.5" y2="172.5" stroke="#40e000" stroke-width="1"/>
<polygon points="804.50,172.50 813.00,170.70 813.00,174.30" fill="#40e000" stroke="#40e000" stroke-width="0.5"/>
<polygon points="939.50,172.50 931.00,174.30 931.00,170.70" fill="#40e000" stroke="#40e000" stroke-width="0.5"/>
<text class="t" x="872" y="178.0" font-size="15" fill="#e6a800" text-anchor="middle" textLength="16" lengthAdjust="spacingAndGlyphs">50</text>
<line x1="804.5" y1="196.5" x2="836" y2="196.5" stroke="#40e000" stroke-width="1"/>
<line x1="854" y1="196.5" x2="885.5" y2="196.5" stroke="#40e000" stroke-width="1"/>
<polygon points="804.50,196.50 813.00,194.70 813.00,198.30" fill="#40e000" stroke="#40e000" stroke-width="0.5"/>
<polygon points="885.50,196.50 877.00,198.30 877.00,194.70" fill="#40e000" stroke="#40e000" stroke-width="0.5"/>
<text class="t" x="845" y="202.0" font-size="15" fill="#e6a800" text-anchor="middle" textLength="16" lengthAdjust="spacingAndGlyphs">30</text>
<line x1="804.5" y1="220.5" x2="817" y2="220.5" stroke="#40e000" stroke-width="1"/>
<line x1="833" y1="220.5" x2="845.5" y2="220.5" stroke="#40e000" stroke-width="1"/>
<polygon points="804.50,220.50 813.00,218.70 813.00,222.30" fill="#40e000" stroke="#40e000" stroke-width="0.5"/>
<polygon points="845.50,220.50 837.00,222.30 837.00,218.70" fill="#40e000" stroke="#40e000" stroke-width="0.5"/>
<text class="t" x="825" y="226.0" font-size="15" fill="#e6a800" text-anchor="middle" textLength="14" lengthAdjust="spacingAndGlyphs">15</text>
<g transform="translate(804.5 296.5) rotate(-90)">
<polyline points="-6.5,-11 6.5,-11 0,0 -6.5,-11" fill="none" stroke="#00ffff"/>
<line x1="6.5" y1="-11" x2="13.5" y2="-22.5" stroke="#00ffff"/>
</g>
<text class="t" x="791.5" y="303" font-size="12.5" fill="#ff00ff" textLength="11.5" lengthAdjust="spacingAndGlyphs" transform="rotate(-90 791.5 303)" stroke="#ff00ff" stroke-width="0.35">1.6</text>
<g transform="translate(885.5 291.5) rotate(90)">
<polyline points="-6.5,-11 6.5,-11 0,0 -6.5,-11" fill="none" stroke="#00ffff"/>
<line x1="6.5" y1="-11" x2="13.5" y2="-22.5" stroke="#00ffff"/>
</g>
<text class="t" x="908.5" y="298" font-size="12.5" fill="#ff00ff" textLength="11.5" lengthAdjust="spacingAndGlyphs" transform="rotate(-90 908.5 298)" stroke="#ff00ff" stroke-width="0.35">1.6</text>
<g transform="translate(939.5 338) rotate(90)">
<polyline points="-6.5,-11 6.5,-11 0,0 -6.5,-11" fill="none" stroke="#00ffff"/>
<line x1="6.5" y1="-11" x2="13.5" y2="-22.5" stroke="#00ffff"/>
</g>
<text class="t" x="962.5" y="344.5" font-size="12.5" fill="#ff00ff" textLength="11.5" lengthAdjust="spacingAndGlyphs" transform="rotate(-90 962.5 344.5)" stroke="#ff00ff" stroke-width="0.35">1.6</text>
<line x1="853.5" y1="302.5" x2="901" y2="323.5" stroke="#40e000" stroke-width="1"/>
<polygon points="853.50,302.50 862.00,304.29 860.55,307.58" fill="#40e000" stroke="#40e000" stroke-width="0.5"/>
<text class="t" x="901.5" y="330" font-size="15" fill="#e6a800" textLength="17" lengthAdjust="spacingAndGlyphs" transform="rotate(25 901.5 330)">Ø6</text>
<text class="s" x="843" y="530" font-size="12" fill="#ffff00" textLength="40" lengthAdjust="spacingAndGlyphs" font-weight="bold">SECTION</text>
<text class="s" x="889" y="530" font-size="12" fill="#ffff00" textLength="17" lengthAdjust="spacingAndGlyphs" font-weight="bold">F–F</text>
<text class="cs" x="1053" y="75.5" font-size="23" fill="#ffffff" textLength="37" lengthAdjust="spacingAndGlyphs" font-weight="bold">其余</text>
<polyline points="1097.5,61.5 1120,61.5 1108.5,81 1097.5,61.5" fill="none" stroke="#ffffff" stroke-width="1"/>
<line x1="1120" y1="61.5" x2="1130.5" y2="43" stroke="#ffffff" stroke-width="1"/>
<text class="t" x="1100" y="59" font-size="18" fill="#ffffff" textLength="18" lengthAdjust="spacingAndGlyphs">3.2</text>
<text class="c" x="1026" y="448" font-size="19" fill="#ffffff" textLength="45" lengthAdjust="spacingAndGlyphs" style="font-weight:400;stroke-width:.1px">技术要求</text>
<text class="c" x="963" y="473" font-size="14.5" fill="#ffffff" textLength="3.5" lengthAdjust="spacingAndGlyphs">1</text>
<text class="c" x="967.5" y="473" font-size="14.5" fill="#ffffff" textLength="7.3" lengthAdjust="spacingAndGlyphs">、</text>
<text class="c" x="975" y="473" font-size="14.5" fill="#ffffff" textLength="66" lengthAdjust="spacingAndGlyphs">侧壁与动模固定板为</text>
<text class="c" x="1042" y="473" font-size="14.5" fill="#ffffff" textLength="32" lengthAdjust="spacingAndGlyphs">H7/m6</text>
<text class="c" x="1075" y="473" font-size="14.5" fill="#ffffff" textLength="15" lengthAdjust="spacingAndGlyphs">配合</text>
<text class="c" x="1090.5" y="473" font-size="14.5" fill="#ffffff" textLength="7.3" lengthAdjust="spacingAndGlyphs">，</text>
<text class="c" x="1097" y="473" font-size="14.5" fill="#ffffff" textLength="22" lengthAdjust="spacingAndGlyphs">要求表</text>
<text class="c" x="978" y="494" font-size="14.5" fill="#ffffff" textLength="36.5" lengthAdjust="spacingAndGlyphs">面抛光处理</text>
<text class="c" x="1014.5" y="494" font-size="14.5" fill="#ffffff" textLength="7.3" lengthAdjust="spacingAndGlyphs">；</text>
<text class="c" x="963" y="516.5" font-size="14.5" fill="#ffffff" textLength="4.5" lengthAdjust="spacingAndGlyphs">3</text>
<text class="c" x="967.5" y="516.5" font-size="14.5" fill="#ffffff" textLength="7.3" lengthAdjust="spacingAndGlyphs">、</text>
<text class="c" x="976" y="516.5" font-size="14.5" fill="#ffffff" textLength="74" lengthAdjust="spacingAndGlyphs">未注公差的极限偏差按</text>
<text class="c" x="1051" y="516.5" font-size="14.5" fill="#ffffff" textLength="26" lengthAdjust="spacingAndGlyphs">GB/T</text>
<text class="c" x="1084" y="516.5" font-size="14.5" fill="#ffffff" textLength="50" lengthAdjust="spacingAndGlyphs">1804-2000</text>
<text class="c" x="1135" y="516.5" font-size="14.5" fill="#ffffff" textLength="6.5" lengthAdjust="spacingAndGlyphs">中</text>
<text class="c" x="978" y="537" font-size="14.5" fill="#ffffff" textLength="29" lengthAdjust="spacingAndGlyphs">有关规定</text>
<text class="c" x="1008" y="537" font-size="14.5" fill="#ffffff" textLength="2.5" lengthAdjust="spacingAndGlyphs">,</text>
<text class="c" x="1011" y="537" font-size="14.5" fill="#ffffff" textLength="36.5" lengthAdjust="spacingAndGlyphs">精度等级为</text>
<text class="c" x="1048" y="537" font-size="14.5" fill="#ffffff" textLength="5" lengthAdjust="spacingAndGlyphs">6</text>
<text class="c" x="1054" y="537" font-size="14.5" fill="#ffffff" textLength="7" lengthAdjust="spacingAndGlyphs">级</text>
<text class="c" x="1061.5" y="537" font-size="14.5" fill="#ffffff" textLength="7.3" lengthAdjust="spacingAndGlyphs">；</text>
<text class="c" x="963" y="559" font-size="14.5" fill="#ffffff" textLength="4.5" lengthAdjust="spacingAndGlyphs">4</text>
<text class="c" x="967.5" y="559" font-size="14.5" fill="#ffffff" textLength="7.3" lengthAdjust="spacingAndGlyphs">、</text>
<text class="c" x="976" y="559" font-size="14.5" fill="#ffffff" textLength="52" lengthAdjust="spacingAndGlyphs">未注形位公差按</text>
<text class="c" x="1029" y="559" font-size="14.5" fill="#ffffff" textLength="25" lengthAdjust="spacingAndGlyphs">GB/T</text>
<text class="c" x="1061" y="559" font-size="14.5" fill="#ffffff" textLength="50" lengthAdjust="spacingAndGlyphs">1184-1996</text>
<text class="c" x="1111.5" y="559" font-size="14.5" fill="#ffffff" textLength="7.3" lengthAdjust="spacingAndGlyphs">，</text>
<text class="c" x="1118" y="559" font-size="14.5" fill="#ffffff" textLength="23" lengthAdjust="spacingAndGlyphs">其中直</text>
<text class="c" x="978" y="580" font-size="14.5" fill="#ffffff" textLength="15" lengthAdjust="spacingAndGlyphs">线度</text>
<text class="c" x="993.5" y="580" font-size="14.5" fill="#ffffff" textLength="7.3" lengthAdjust="spacingAndGlyphs">、</text>
<text class="c" x="1000" y="580" font-size="14.5" fill="#ffffff" textLength="22" lengthAdjust="spacingAndGlyphs">平面度</text>
<text class="c" x="1022.5" y="580" font-size="14.5" fill="#ffffff" textLength="7.3" lengthAdjust="spacingAndGlyphs">、</text>
<text class="c" x="1029" y="580" font-size="14.5" fill="#ffffff" textLength="67" lengthAdjust="spacingAndGlyphs">同轴度公差等级均按</text>
<text class="c" x="1097" y="580" font-size="14.5" fill="#ffffff" textLength="5" lengthAdjust="spacingAndGlyphs">C</text>
<text class="c" x="1103" y="580" font-size="14.5" fill="#ffffff" textLength="7" lengthAdjust="spacingAndGlyphs">级</text>
<text class="c" x="1110.5" y="580" font-size="14.5" fill="#ffffff" textLength="7.3" lengthAdjust="spacingAndGlyphs">；</text>
<text class="c" x="963" y="602" font-size="14.5" fill="#ffffff" textLength="4.5" lengthAdjust="spacingAndGlyphs">5</text>
<text class="c" x="967.5" y="602" font-size="14.5" fill="#ffffff" textLength="7.3" lengthAdjust="spacingAndGlyphs">、</text>
<text class="c" x="976" y="602" font-size="14.5" fill="#ffffff" textLength="37" lengthAdjust="spacingAndGlyphs">未注圆角为</text>
<text class="c" x="1014" y="602" font-size="14.5" fill="#ffffff" textLength="21" lengthAdjust="spacingAndGlyphs">R0.5</text>
<text class="c" x="1035.5" y="602" font-size="14.5" fill="#ffffff" textLength="7.3" lengthAdjust="spacingAndGlyphs">，</text>
<text class="c" x="1043" y="602" font-size="14.5" fill="#ffffff" textLength="39" lengthAdjust="spacingAndGlyphs">锐角去毛刺</text>
<line x1="667.5" y1="635.5" x2="882.5" y2="635.5" stroke="#ffffff" stroke-width="1"/>
<line x1="667.5" y1="654.5" x2="882.5" y2="654.5" stroke="#ffffff" stroke-width="1"/>
<line x1="667.5" y1="672.5" x2="882.5" y2="672.5" stroke="#ffffff" stroke-width="1"/>
<line x1="667.5" y1="691.5" x2="882.5" y2="691.5" stroke="#ffffff" stroke-width="1"/>
<line x1="667.5" y1="635.5" x2="1150.5" y2="635.5" stroke="#ffffff" stroke-width="1"/>
<line x1="667.5" y1="710.5" x2="882.5" y2="710.5" stroke="#ffffff" stroke-width="1"/>
<line x1="667.5" y1="729.5" x2="882.5" y2="729.5" stroke="#ffffff" stroke-width="1"/>
<line x1="667.5" y1="748.5" x2="882.5" y2="748.5" stroke="#ffffff" stroke-width="1"/>
<line x1="667.5" y1="766.5" x2="882.5" y2="766.5" stroke="#ffffff" stroke-width="1"/>
<line x1="667.5" y1="635.5" x2="667.5" y2="785.5" stroke="#ffffff" stroke-width="1"/>
<line x1="694.5" y1="635.5" x2="694.5" y2="710.5" stroke="#ffffff" stroke-width="1"/>
<line x1="721.5" y1="635.5" x2="721.5" y2="710.5" stroke="#ffffff" stroke-width="1"/>
<line x1="764.5" y1="635.5" x2="764.5" y2="710.5" stroke="#ffffff" stroke-width="1"/>
<line x1="699.5" y1="710.5" x2="699.5" y2="785.5" stroke="#ffffff" stroke-width="1"/>
<line x1="732.5" y1="710.5" x2="732.5" y2="785.5" stroke="#ffffff" stroke-width="1"/>
<line x1="774.5" y1="710.5" x2="774.5" y2="785.5" stroke="#ffffff" stroke-width="1"/>
<line x1="807.5" y1="635.5" x2="807.5" y2="785.5" stroke="#ffffff" stroke-width="1"/>
<line x1="839.5" y1="635.5" x2="839.5" y2="785.5" stroke="#ffffff" stroke-width="1"/>
<line x1="882.5" y1="635.5" x2="882.5" y2="785.5" stroke="#ffffff" stroke-width="1"/>
<line x1="1016.5" y1="635.5" x2="1016.5" y2="785.5" stroke="#ffffff" stroke-width="1"/>
<line x1="1016.5" y1="683.5" x2="1150.5" y2="683.5" stroke="#ffffff" stroke-width="1"/>
<line x1="882.5" y1="710.5" x2="1016.5" y2="710.5" stroke="#ffffff" stroke-width="1"/>
<line x1="882.5" y1="737.5" x2="1150.5" y2="737.5" stroke="#ffffff" stroke-width="1"/>
<line x1="882.5" y1="761.5" x2="1016.5" y2="761.5" stroke="#ffffff" stroke-width="1"/>
<line x1="952.5" y1="710.5" x2="952.5" y2="761.5" stroke="#ffffff" stroke-width="1"/>
<line x1="984.5" y1="710.5" x2="984.5" y2="761.5" stroke="#ffffff" stroke-width="1"/>
<line x1="899.5" y1="737.5" x2="899.5" y2="761.5" stroke="#ffffff" stroke-width="1"/>
<line x1="917.5" y1="737.5" x2="917.5" y2="761.5" stroke="#ffffff" stroke-width="1"/>
<line x1="934.5" y1="737.5" x2="934.5" y2="761.5" stroke="#ffffff" stroke-width="1"/>
<text class="cb" x="672" y="704" font-size="8.5" fill="#ffffff" textLength="16" lengthAdjust="spacingAndGlyphs" font-weight="bold">标记</text>
<text class="cb" x="698" y="704" font-size="8.5" fill="#ffffff" textLength="16" lengthAdjust="spacingAndGlyphs" font-weight="bold">处数</text>
<text class="cb" x="729" y="704" font-size="8.5" fill="#ffffff" textLength="7" lengthAdjust="spacingAndGlyphs" font-weight="bold">分</text>
<text class="cb" x="745" y="704" font-size="8.5" fill="#ffffff" textLength="7" lengthAdjust="spacingAndGlyphs" font-weight="bold">区</text>
<text class="cb" x="766" y="704" font-size="8.5" fill="#ffffff" textLength="39" lengthAdjust="spacingAndGlyphs" font-weight="bold">更改文件号</text>
<text class="cb" x="815" y="704" font-size="8.5" fill="#ffffff" textLength="15" lengthAdjust="spacingAndGlyphs" font-weight="bold">签名</text>
<text class="cb" x="842" y="704" font-size="8.5" fill="#ffffff" textLength="38" lengthAdjust="spacingAndGlyphs" font-weight="bold">年、月、日</text>
<text class="cb" x="672" y="723.5" font-size="8.5" fill="#ffffff" textLength="7" lengthAdjust="spacingAndGlyphs" font-weight="bold">设</text>
<text class="cb" x="689" y="723.5" font-size="8.5" fill="#ffffff" textLength="7" lengthAdjust="spacingAndGlyphs" font-weight="bold">计</text>
<text class="cb" x="780" y="723.5" font-size="8.5" fill="#ffffff" textLength="23" lengthAdjust="spacingAndGlyphs" font-weight="bold">标准化</text>
<text class="cb" x="811" y="723.5" font-size="8.5" fill="#ffffff" textLength="25" lengthAdjust="spacingAndGlyphs" font-weight="bold">(签名)</text>
<text class="cb" x="846" y="723.5" font-size="8.5" fill="#ffffff" textLength="31" lengthAdjust="spacingAndGlyphs" font-weight="bold">(年月日)</text>
<text class="cb" x="672" y="762" font-size="8.5" fill="#ffffff" textLength="7" lengthAdjust="spacingAndGlyphs" font-weight="bold">审</text>
<text class="cb" x="687" y="762" font-size="8.5" fill="#ffffff" textLength="7" lengthAdjust="spacingAndGlyphs" font-weight="bold">核</text>
<text class="cb" x="672" y="779.5" font-size="8.5" fill="#ffffff" textLength="7" lengthAdjust="spacingAndGlyphs" font-weight="bold">工</text>
<text class="cb" x="688" y="779.5" font-size="8.5" fill="#ffffff" textLength="7" lengthAdjust="spacingAndGlyphs" font-weight="bold">艺</text>
<text class="cb" x="779" y="779.5" font-size="8.5" fill="#ffffff" textLength="7" lengthAdjust="spacingAndGlyphs" font-weight="bold">批</text>
<text class="cb" x="794" y="779.5" font-size="8.5" fill="#ffffff" textLength="7" lengthAdjust="spacingAndGlyphs" font-weight="bold">准</text>
<text class="cb" x="892" y="728.5" font-size="9.5" fill="#ffffff" textLength="8" lengthAdjust="spacingAndGlyphs" font-weight="bold">阶</text>
<text class="cb" x="908" y="728.5" font-size="9.5" fill="#ffffff" textLength="8" lengthAdjust="spacingAndGlyphs" font-weight="bold">段</text>
<text class="cb" x="923" y="728.5" font-size="9.5" fill="#ffffff" textLength="8" lengthAdjust="spacingAndGlyphs" font-weight="bold">标</text>
<text class="cb" x="939" y="728.5" font-size="9.5" fill="#ffffff" textLength="8" lengthAdjust="spacingAndGlyphs" font-weight="bold">记</text>
<text class="cb" x="957" y="728.5" font-size="9.5" fill="#ffffff" textLength="8" lengthAdjust="spacingAndGlyphs" font-weight="bold">重</text>
<text class="cb" x="973" y="728.5" font-size="9.5" fill="#ffffff" textLength="8" lengthAdjust="spacingAndGlyphs" font-weight="bold">量</text>
<text class="cb" x="989" y="728.5" font-size="9.5" fill="#ffffff" textLength="8" lengthAdjust="spacingAndGlyphs" font-weight="bold">比</text>
<text class="cb" x="1005" y="728.5" font-size="9.5" fill="#ffffff" textLength="8" lengthAdjust="spacingAndGlyphs" font-weight="bold">例</text>
<text class="cb" x="903" y="778" font-size="9.5" fill="#ffffff" textLength="8" lengthAdjust="spacingAndGlyphs" font-weight="bold">共</text>
<text class="cb" x="933" y="778" font-size="9.5" fill="#ffffff" textLength="8" lengthAdjust="spacingAndGlyphs" font-weight="bold">张</text>
<text class="cb" x="964" y="778" font-size="9.5" fill="#ffffff" textLength="8" lengthAdjust="spacingAndGlyphs" font-weight="bold">第</text>
<text class="cb" x="995" y="778" font-size="9.5" fill="#ffffff" textLength="8" lengthAdjust="spacingAndGlyphs" font-weight="bold">页</text>
<text class="s" x="914" y="677" font-size="24" fill="#ffffff" textLength="37" lengthAdjust="spacingAndGlyphs" font-weight="bold">718H</text>
<text class="cs" x="1050" y="719" font-size="22" fill="#ffffff" textLength="55" lengthAdjust="spacingAndGlyphs" font-weight="600">塑料杯</text>
<text class="cs" x="1049" y="769" font-size="22" fill="#ffffff" textLength="36" lengthAdjust="spacingAndGlyphs" font-weight="600">型芯</text>
<polygon points="776.5,734 786.5,731.5 786.5,746.5 776.5,744.5" fill="none" stroke="#ffffff" stroke-width="1"/>
<line x1="776" y1="739.5" x2="787" y2="739.5" stroke="#ff0000" stroke-width="1"/>
<circle cx="797.5" cy="739.5" r="7.5" fill="none" stroke="#ffffff" stroke-width="1.2" shape-rendering="geometricPrecision"/>
<circle cx="797.5" cy="739.5" r="4" fill="none" stroke="#ffffff" stroke-width="1.2" shape-rendering="geometricPrecision"/>
<line x1="789" y1="739.5" x2="806" y2="739.5" stroke="#ff0000" stroke-width="1"/>
<line x1="797.5" y1="730" x2="797.5" y2="748" stroke="#ff0000" stroke-width="1"/>
<text class="cb" x="47" y="524" font-size="8" fill="#ffffff" textLength="46" lengthAdjust="spacingAndGlyphs" font-weight="bold">借通用件登记</text>
<text class="cb" x="59" y="570" font-size="8.5" fill="#ffffff" textLength="16" lengthAdjust="spacingAndGlyphs" font-weight="bold">扫描</text>
<text class="cb" x="59" y="616" font-size="8.5" fill="#ffffff" textLength="16" lengthAdjust="spacingAndGlyphs" font-weight="bold">校描</text>
<text class="cb" x="50" y="661" font-size="8" fill="#ffffff" textLength="39" lengthAdjust="spacingAndGlyphs" font-weight="bold">旧底图总号</text>
<text class="cb" x="59" y="707" font-size="8.5" fill="#ffffff" textLength="7" lengthAdjust="spacingAndGlyphs" font-weight="bold">签</text>
<text class="cb" x="75" y="707" font-size="8.5" fill="#ffffff" textLength="7" lengthAdjust="spacingAndGlyphs" font-weight="bold">字</text>
<text class="cb" x="59" y="752" font-size="8.5" fill="#ffffff" textLength="7" lengthAdjust="spacingAndGlyphs" font-weight="bold">日</text>
<text class="cb" x="74" y="752" font-size="8.5" fill="#ffffff" textLength="7" lengthAdjust="spacingAndGlyphs" font-weight="bold">期</text>
</svg>
</body></html>
